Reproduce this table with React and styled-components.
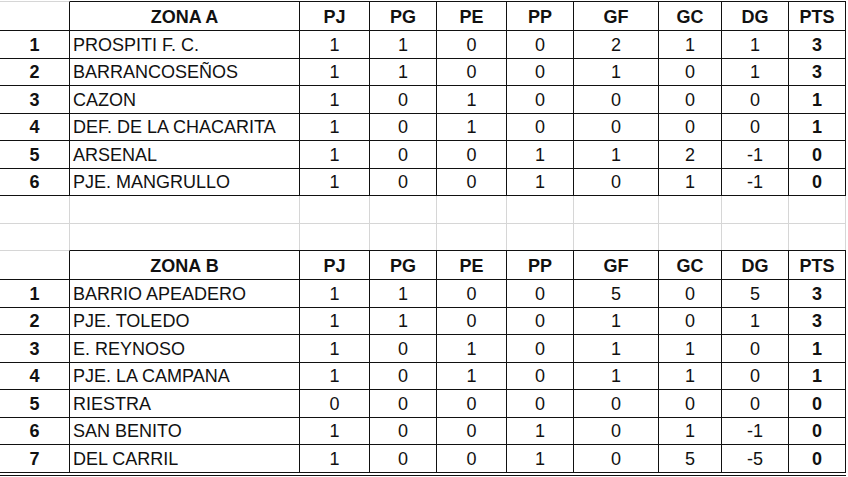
import React from "react";
import styled, { createGlobalStyle, css } from "styled-components";

const GlobalStyle = createGlobalStyle`
  html, body { margin: 0; padding: 0; background: #ffffff; }
  body { font-family: "Liberation Sans", Arial, sans-serif; color: #111; }
`;

const COLS = "70px 230px 70px 67px 70px 67px 85px 63px 67px 57px";
const LINE = "#111";
const GRID = "#d6d6d6";

const Sheet = styled.div`
  width: 848px;
  height: 477px;
  padding-top: 1px;
  box-sizing: border-box;
  overflow: hidden;
  background: #fff;
`;

const Table = styled.div`
  display: flex;
  flex-direction: column;
  width: 846px;
  ${(p) =>
    p.$double &&
    css`
      padding-bottom: 2px;
      border-bottom: 1px solid ${LINE};
    `}
`;

const Row = styled.div`
  display: grid;
  grid-template-columns: ${COLS};
  height: ${(p) => p.$h}px;
`;

const Cell = styled.div`
  box-sizing: border-box;
  display: flex;
  align-items: flex-end;
  justify-content: ${(p) => (p.$kind === "name" ? "flex-start" : "center")};
  padding: 0 0 4px ${(p) => (p.$kind === "name" ? "3px" : "0")};
  border-right: 1px solid ${LINE};
  border-bottom: 1px solid ${LINE};
  ${(p) =>
    p.$top &&
    css`
      border-top: 1px solid ${p.$kind === "rank" ? GRID : LINE};
    `}
  font-size: 18px;
  line-height: 1;
  font-weight: ${(p) => (p.$bold ? 700 : 400)};
  white-space: nowrap;
  overflow: hidden;
`;

const GapCell = styled.div`
  box-sizing: border-box;
  border-right: 1px solid ${GRID};
  border-bottom: ${(p) => (p.$last ? "none" : `1px solid ${GRID}`)};
`;

const HEADERS = ["PJ", "PG", "PE", "PP", "GF", "GC", "DG", "PTS"];

const ZONA_A = [
  ["PROSPITI F. C.", 1, 1, 0, 0, 2, 1, 1, 3],
  ["BARRANCOSEÑOS", 1, 1, 0, 0, 1, 0, 1, 3],
  ["CAZON", 1, 0, 1, 0, 0, 0, 0, 1],
  ["DEF. DE LA CHACARITA", 1, 0, 1, 0, 0, 0, 0, 1],
  ["ARSENAL", 1, 0, 0, 1, 1, 2, -1, 0],
  ["PJE. MANGRULLO", 1, 0, 0, 1, 0, 1, -1, 0],
];

const ZONA_B = [
  ["BARRIO APEADERO", 1, 1, 0, 0, 5, 0, 5, 3],
  ["PJE. TOLEDO", 1, 1, 0, 0, 1, 0, 1, 3],
  ["E. REYNOSO", 1, 0, 1, 0, 1, 1, 0, 1],
  ["PJE. LA CAMPANA", 1, 0, 1, 0, 1, 1, 0, 1],
  ["RIESTRA", 0, 0, 0, 0, 0, 0, 0, 0],
  ["SAN BENITO", 1, 0, 0, 1, 0, 1, -1, 0],
  ["DEL CARRIL", 1, 0, 0, 1, 0, 5, -5, 0],
];

function ZoneTable({ title, rows, double }) {
  return (
    <Table $double={double}>
      <Row $h={30}>
        <Cell $kind="rank" $top />
        <Cell $kind="title" $top $bold>
          {title}
        </Cell>
        {HEADERS.map((h) => (
          <Cell key={h} $kind="num" $top $bold>
            {h}
          </Cell>
        ))}
      </Row>
      {rows.map((r, i) => (
        <Row key={r[0]} $h={27.5}>
          <Cell $kind="rank" $bold>
            {i + 1}
          </Cell>
          <Cell $kind="name">{r[0]}</Cell>
          {r.slice(1).map((v, j) => (
            <Cell key={j} $kind="num" $bold={j === 7}>
              {v}
            </Cell>
          ))}
        </Row>
      ))}
    </Table>
  );
}

function GapRow({ h, last }) {
  return (
    <Row $h={h}>
      {Array.from({ length: 10 }).map((_, i) => (
        <GapCell key={i} $last={last} />
      ))}
    </Row>
  );
}

export default function App() {
  return (
    <>
      <GlobalStyle />
      <Sheet>
        <ZoneTable title="ZONA A" rows={ZONA_A} />
        <GapRow h={27.5} />
        <GapRow h={26.5} last />
        <ZoneTable title="ZONA B" rows={ZONA_B} double />
      </Sheet>
    </>
  );
}
